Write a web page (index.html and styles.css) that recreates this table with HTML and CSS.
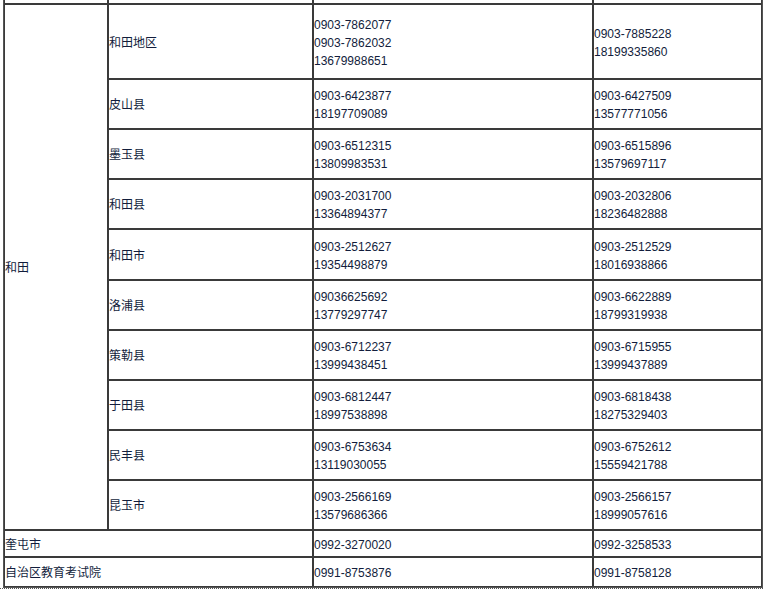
FILE: index.html
```html
<!DOCTYPE html>
<html lang="zh-CN">
<head>
<meta charset="utf-8">
<title>联系电话</title>
<link rel="stylesheet" href="styles.css">
</head>
<body>
<div class="page">
<table class="phones">
<colgroup>
<col class="c1"><col class="c2"><col class="c3"><col class="c4">
</colgroup>
<tbody>
<tr class="r-top"><td></td><td></td><td></td><td></td></tr>
<tr class="r3">
<td rowspan="10">和田</td>
<td>和田地区</td>
<td>0903-7862077<br>0903-7862032<br>13679988651</td>
<td>0903-7885228<br>18199335860</td>
</tr>
<tr class="r2"><td>皮山县</td><td>0903-6423877<br>18197709089</td><td>0903-6427509<br>13577771056</td></tr>
<tr class="r2"><td>墨玉县</td><td>0903-6512315<br>13809983531</td><td>0903-6515896<br>13579697117</td></tr>
<tr class="r2"><td>和田县</td><td>0903-2031700<br>13364894377</td><td>0903-2032806<br>18236482888</td></tr>
<tr class="r2b"><td>和田市</td><td>0903-2512627<br>19354498879</td><td>0903-2512529<br>18016938866</td></tr>
<tr class="r2"><td>洛浦县</td><td>09036625692<br>13779297747</td><td>0903-6622889<br>18799319938</td></tr>
<tr class="r2"><td>策勒县</td><td>0903-6712237<br>13999438451</td><td>0903-6715955<br>13999437889</td></tr>
<tr class="r2"><td>于田县</td><td>0903-6812447<br>18997538898</td><td>0903-6818438<br>18275329403</td></tr>
<tr class="r2"><td>民丰县</td><td>0903-6753634<br>13119030055</td><td>0903-6752612<br>15559421788</td></tr>
<tr class="r2"><td>昆玉市</td><td>0903-2566169<br>13579686366</td><td>0903-2566157<br>18999057616</td></tr>
<tr class="r1a"><td colspan="2">奎屯市</td><td>0992-3270020</td><td>0992-3258533</td></tr>
<tr class="r1b"><td colspan="2">自治区教育考试院</td><td>0991-8753876</td><td>0991-8758128</td></tr>
</tbody>
</table>
</div>
</body>
</html>
```
FILE: styles.css
```css
html, body {
  margin: 0;
  padding: 0;
  background: #fff;
}

.page {
  width: 763px;
  padding-left: 3px;
  box-sizing: border-box;
  border-bottom: 1px dotted #555;
}

.phones {
  table-layout: fixed;
  width: 760px;
  border-collapse: separate;
  border-spacing: 0;
  border: 1px solid #555;
  border-top: 0;
  font-family: "Liberation Sans", "Noto Sans CJK SC", sans-serif;
  font-size: 12px;
  line-height: 18px;
  color: #121d3c;
}

.c1 { width: 104px; }
.c2 { width: 205px; }
.c3 { width: 280px; }
.c4 { width: 169px; }

.phones td {
  border: 1px solid #3a3a3a;
  padding: 2px 0 0;
  vertical-align: middle;
  text-align: left;
  white-space: nowrap;
}

.r-top { height: 4px; }
.r-top td { border-top: 0; padding: 0; line-height: 0; font-size: 0; }
.r3 { height: 75px; }
.r2 { height: 50px; }
.r2b { height: 51px; }
.r1a { height: 27px; }
.r1b { height: 30px; }
```
